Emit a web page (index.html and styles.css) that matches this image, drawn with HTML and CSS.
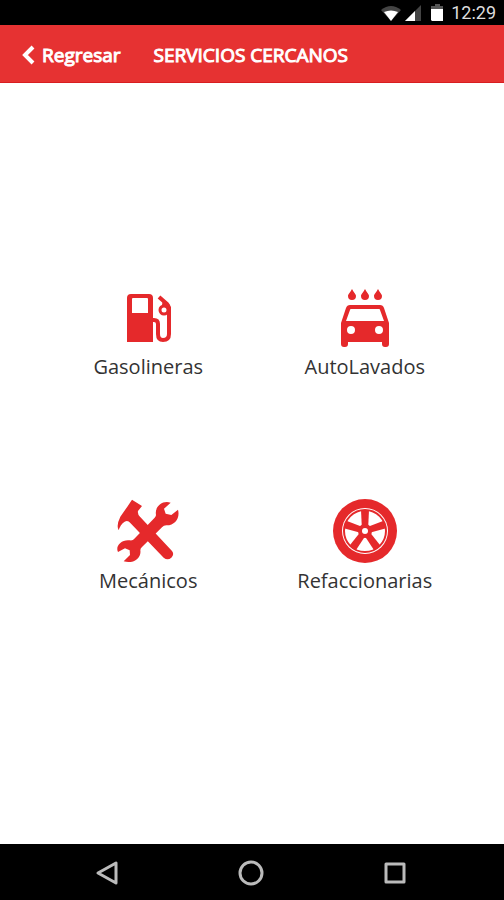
FILE: index.html
```html
<!DOCTYPE html>
<html lang="es">
<head>
<meta charset="utf-8">
<meta name="viewport" content="width=device-width, initial-scale=1">
<title>Servicios cercanos</title>
<link rel="stylesheet" href="styles.css">
</head>
<body>
<div class="status">
  <svg width="68" height="20" viewBox="0 0 68 20" aria-hidden="true">
    <path d="M1 7Q11 -1 21 7L11 18Z" fill="#444"/>
    <path d="M4 9Q11 6 18 9L11 18Z" fill="#fff"/>
    <path d="M25 18L41 2V18Z" fill="#444"/>
    <path d="M25 18L35 8V18Z" fill="#fff"/>
    <path d="M55 1H60V3H63V6H51V3H55Z" fill="#555"/>
    <path d="M51 6H63V18H52L51 17Z" fill="#fff"/>
  </svg>
  <time class="clock">12:29</time>
</div>
<header class="bar">
  <button class="back" type="button">
    <svg width="13" height="20" viewBox="0 0 13 20" aria-hidden="true"><path d="M11 2L3 10L11 18" fill="none" stroke="#fff" stroke-width="4"/></svg>
    <span>Regresar</span>
  </button>
  <h1 class="title">SERVICIOS CERCANOS</h1>
</header>
<main class="services">
  <a class="service" href="#gasolineras">
    <svg class="icon" viewBox="0 0 64 64" aria-hidden="true">
      <path fill-rule="evenodd" d="M15 9H33Q37 9 37 13V57H11V13Q11 9 15 9ZM17 13Q16 13 16 14V28H32V14Q32 13 31 13Z"/>
      <path class="line" stroke-width="4" d="M36 35H38Q42 35 42 39V49Q42 55 47 55Q53 55 53 49V24Q53 21 51 19L43 12"/>
      <circle class="line" stroke-width="3" cx="48" cy="25" r="4"/>
      <path d="M47 14L55 22V28L51 22L46 20Z"/>
    </svg>
    <span>Gasolineras</span>
  </a>
  <a class="service" href="#autolavados">
    <svg class="icon" viewBox="0 0 64 64" aria-hidden="true">
      <path d="M19 4C17 8 15 9 15 11A4 4 0 0 0 23 11C23 9 21 8 19 4ZM32 4C30 8 28 9 28 11A4 4 0 0 0 36 11C36 9 34 8 32 4ZM45 4C43 8 41 9 41 11A4 4 0 0 0 49 11C49 9 47 8 45 4Z"/>
      <path fill-rule="evenodd" d="M17 20H47Q50 20 51 23L56 38V59Q56 62 53 62H52Q49 62 49 59V57H15V59Q15 62 12 62H11Q8 62 8 59V38L13 23Q14 20 17 20ZM18 24Q17 24 17 25L13 36H51L47 25Q47 24 46 24ZM18 41A4 4 0 1 0 18 49A4 4 0 1 0 18 41ZM46 41A4 4 0 1 0 46 49A4 4 0 1 0 46 41Z"/>
    </svg>
    <span>AutoLavados</span>
  </a>
  <a class="service" href="#mecanicos">
    <svg class="icon" viewBox="0 3 192 192" aria-hidden="true">
      <path d="M48 5L78 24L66 39Q64 48 72 56L168 159Q176 169 166 179Q155 189 143 179L43 75Q36 66 26 71Q13 79 8 97Q0 82 13 56L34 26Z"/>
      <path d="M164 14C140 5 115 26 120 51Q120 55 116 59L55 122Q51 128 42 127C17 123 -3 144 6 162L27 151L41 157L42 171L23 190C50 199 77 181 73 157Q73 151 78 147L138 88Q143 82 151 82C176 83 193 60 186 35L166 51L149 47L144 32Z"/>
    </svg>
    <span>Mecánicos</span>
  </a>
  <a class="service" href="#refaccionarias">
    <svg class="icon" viewBox="0 0 64 64" aria-hidden="true">
      <circle cx="32" cy="32" r="32"/>
      <circle cx="32" cy="32" r="23" fill="#fff"/>
      <circle class="line" cx="32" cy="32" r="21" stroke-width="2"/>
      <g>
        <path id="spoke" d="M28 11H36L35 32H29Z"/>
        <use href="#spoke" transform="rotate(72 32 32)"/>
        <use href="#spoke" transform="rotate(144 32 32)"/>
        <use href="#spoke" transform="rotate(216 32 32)"/>
        <use href="#spoke" transform="rotate(288 32 32)"/>
      </g>
      <circle cx="32" cy="32" r="7"/>
      <circle cx="32" cy="32" r="3" fill="#fff"/>
    </svg>
    <span>Refaccionarias</span>
  </a>
</main>
<nav class="nav">
  <button type="button" aria-label="Atrás"><svg width="26" height="26" viewBox="0 0 26 26"><path d="M22 3V23L4 13Z"/></svg></button>
  <button type="button" aria-label="Inicio"><svg width="26" height="26" viewBox="0 0 26 26"><circle cx="13" cy="13" r="11"/></svg></button>
  <button type="button" aria-label="Recientes"><svg width="26" height="26" viewBox="0 0 26 26"><rect x="4" y="4" width="18" height="18"/></svg></button>
</nav>
</body>
</html>
```
FILE: styles.css
```css
* { box-sizing: border-box; }

body {
  margin: 0;
  min-height: 100vh;
  display: flex;
  flex-direction: column;
  background: #fff;
  color: #333;
  font-family: "Open Sans", "Noto Sans", sans-serif;
}

button {
  padding: 0;
  border: 0;
  background: none;
  color: inherit;
  font: inherit;
}

svg { display: block; }

.status {
  height: 25px;
  padding-right: 8px;
  display: flex;
  align-items: center;
  justify-content: flex-end;
  gap: 3px;
  background: #000;
}

.clock {
  color: #ddd;
  font: 400 18px/24px Roboto, sans-serif;
}

.bar {
  height: 58px;
  padding: 2px 22px 0;
  display: flex;
  align-items: center;
  gap: 33px;
  background: #e63232;
  border-bottom: 1px solid #d81e20;
  color: #fff;
  font-size: 19px;
  -webkit-text-stroke: 1px #fff;
}

.back {
  display: flex;
  align-items: center;
  gap: 7px;
}

.title {
  margin: 0;
  font-size: 19px;
  font-weight: 400;
}

.services {
  flex: 1;
  padding: 0 31px 50px 40px;
  display: grid;
  grid-template-columns: 1fr 1fr;
  align-content: center;
  row-gap: 120px;
}

.service {
  display: flex;
  flex-direction: column;
  align-items: center;
  gap: 6px;
  color: #333;
  font-size: 20px;
  line-height: 24px;
  text-decoration: none;
}

.icon {
  width: 64px;
  height: 64px;
  fill: #e5292b;
}

.line {
  fill: none;
  stroke: #e5292b;
}

.nav {
  height: 56px;
  padding: 2px 37px 0 35px;
  display: grid;
  grid-template-columns: repeat(3, 1fr);
  background: #000;
}

.nav button {
  display: grid;
  place-items: center;
}

.nav svg {
  fill: none;
  stroke: #bbb;
  stroke-width: 3;
  stroke-linejoin: round;
}
```
